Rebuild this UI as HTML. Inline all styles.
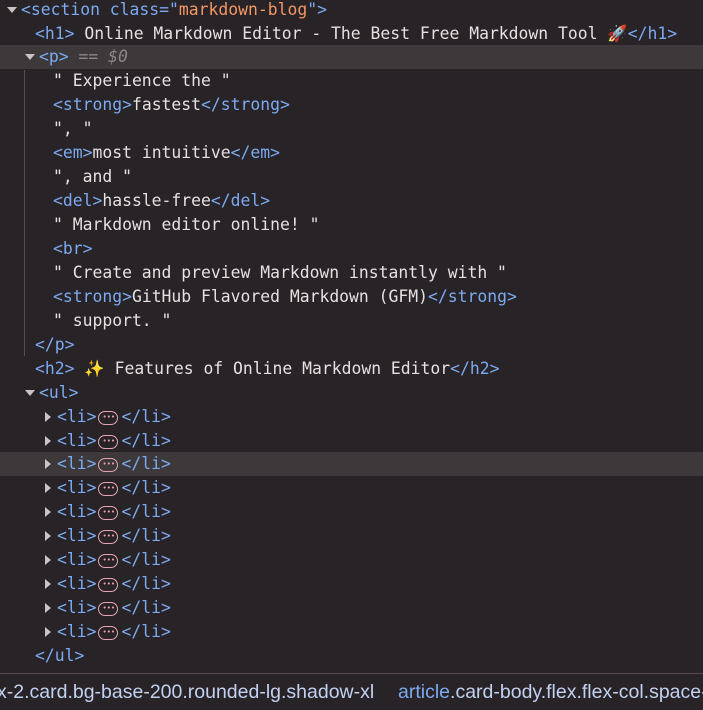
<!DOCTYPE html>
<html><head><meta charset="utf-8"><style>
body{margin:0;width:703px;height:709px;background:#282326;overflow:hidden;position:relative;font-family:"DejaVu Sans Mono","Liberation Mono",monospace;font-size:16.4px;color:#e3e1e1}
.r{position:absolute;left:0;right:0;height:24px;line-height:24px;white-space:pre}
.hl{background:#3d3839}
.t{color:#7caaf0}
.v{color:#f29766}
.g{color:#8d8888;font-style:italic}
.tri{position:absolute;width:0;height:0}
.dn{border-left:5px solid transparent;border-right:5px solid transparent;border-top:6px solid #c9c4c4;top:9px}
.rt{border-top:5px solid transparent;border-bottom:5px solid transparent;border-left:6px solid #c9c4c4;top:7px}
.dots{display:inline-block;width:20px;height:14px;border:1.4px solid #e8a3b0;border-radius:8px;vertical-align:-3px;box-sizing:border-box;position:relative;margin:0 3px 0 2px}
.dots:after{content:"•••";position:absolute;left:3px;top:-7px;font-size:7px;color:#e8a3b0;letter-spacing:0}
.guide{position:absolute;left:24px;top:70px;width:1px;height:286px;background:#5b4a50}
.bar{position:absolute;left:0;right:0;top:673px;height:36px;border-top:1px solid #55484d;background:#282326;font-family:"Liberation Sans",sans-serif;font-size:19.5px;color:#c2d1f2;line-height:36px;white-space:pre}
</style></head><body>
<div class="r" style="top:-2px"><span class="tri dn" style="left:7px"></span><span style="position:absolute;left:21px"><span class="t">&lt;section class=</span><span class="t">"</span><span class="v">markdown-blog</span><span class="t">"&gt;</span></span></div>
<div class="r" style="top:22px"><span style="position:absolute;left:35px"><span class="t">&lt;h1&gt;</span> Online Markdown Editor - The Best Free Markdown Tool 🚀<span class="t">&lt;/h1&gt;</span></span></div>
<div class="r hl" style="top:45px"><span class="tri dn" style="left:25px"></span><span style="position:absolute;left:39px"><span class="t">&lt;p&gt;</span> <span class="g">== $0</span></span></div>
<div class="guide"></div>
<div class="r" style="top:69px"><span style="position:absolute;left:53px">" Experience the "</span></div>
<div class="r" style="top:93px"><span style="position:absolute;left:53px"><span class="t">&lt;strong&gt;</span>fastest<span class="t">&lt;/strong&gt;</span></span></div>
<div class="r" style="top:117px"><span style="position:absolute;left:53px">", "</span></div>
<div class="r" style="top:141px"><span style="position:absolute;left:53px"><span class="t">&lt;em&gt;</span>most intuitive<span class="t">&lt;/em&gt;</span></span></div>
<div class="r" style="top:165px"><span style="position:absolute;left:53px">", and "</span></div>
<div class="r" style="top:189px"><span style="position:absolute;left:53px"><span class="t">&lt;del&gt;</span>hassle-free<span class="t">&lt;/del&gt;</span></span></div>
<div class="r" style="top:213px"><span style="position:absolute;left:53px">" Markdown editor online! "</span></div>
<div class="r" style="top:237px"><span style="position:absolute;left:53px"><span class="t">&lt;br&gt;</span></span></div>
<div class="r" style="top:261px"><span style="position:absolute;left:53px">" Create and preview Markdown instantly with "</span></div>
<div class="r" style="top:285px"><span style="position:absolute;left:53px"><span class="t">&lt;strong&gt;</span>GitHub Flavored Markdown (GFM)<span class="t">&lt;/strong&gt;</span></span></div>
<div class="r" style="top:309px"><span style="position:absolute;left:53px">" support. "</span></div>
<div class="r" style="top:333px"><span style="position:absolute;left:35px"><span class="t">&lt;/p&gt;</span></span></div>
<div class="r" style="top:357px"><span style="position:absolute;left:35px"><span class="t">&lt;h2&gt;</span> ✨ Features of Online Markdown Editor<span class="t">&lt;/h2&gt;</span></span></div>
<div class="r" style="top:381px"><span class="tri dn" style="left:25px"></span><span style="position:absolute;left:39px"><span class="t">&lt;ul&gt;</span></span></div>
<div class="r" style="top:405px"><span class="tri rt" style="left:45px"></span><span style="position:absolute;left:57px"><span class="t">&lt;li&gt;</span><span class="dots"></span><span class="t">&lt;/li&gt;</span></span></div>
<div class="r" style="top:429px"><span class="tri rt" style="left:45px"></span><span style="position:absolute;left:57px"><span class="t">&lt;li&gt;</span><span class="dots"></span><span class="t">&lt;/li&gt;</span></span></div>
<div class="r hl" style="top:452px"><span class="tri rt" style="left:45px"></span><span style="position:absolute;left:57px"><span class="t">&lt;li&gt;</span><span class="dots"></span><span class="t">&lt;/li&gt;</span></span></div>
<div class="r" style="top:476px"><span class="tri rt" style="left:45px"></span><span style="position:absolute;left:57px"><span class="t">&lt;li&gt;</span><span class="dots"></span><span class="t">&lt;/li&gt;</span></span></div>
<div class="r" style="top:500px"><span class="tri rt" style="left:45px"></span><span style="position:absolute;left:57px"><span class="t">&lt;li&gt;</span><span class="dots"></span><span class="t">&lt;/li&gt;</span></span></div>
<div class="r" style="top:524px"><span class="tri rt" style="left:45px"></span><span style="position:absolute;left:57px"><span class="t">&lt;li&gt;</span><span class="dots"></span><span class="t">&lt;/li&gt;</span></span></div>
<div class="r" style="top:548px"><span class="tri rt" style="left:45px"></span><span style="position:absolute;left:57px"><span class="t">&lt;li&gt;</span><span class="dots"></span><span class="t">&lt;/li&gt;</span></span></div>
<div class="r" style="top:572px"><span class="tri rt" style="left:45px"></span><span style="position:absolute;left:57px"><span class="t">&lt;li&gt;</span><span class="dots"></span><span class="t">&lt;/li&gt;</span></span></div>
<div class="r" style="top:596px"><span class="tri rt" style="left:45px"></span><span style="position:absolute;left:57px"><span class="t">&lt;li&gt;</span><span class="dots"></span><span class="t">&lt;/li&gt;</span></span></div>
<div class="r" style="top:620px"><span class="tri rt" style="left:45px"></span><span style="position:absolute;left:57px"><span class="t">&lt;li&gt;</span><span class="dots"></span><span class="t">&lt;/li&gt;</span></span></div>
<div class="r" style="top:644px"><span style="position:absolute;left:35px"><span class="t">&lt;/ul&gt;</span></span></div>
<div class="bar"><span style="position:absolute;left:-3px">x-2.card.bg-base-200.rounded-lg.shadow-xl</span><span style="position:absolute;left:398px"><span style="color:#7caaf0">article</span>.card-body.flex.flex-col.space-y-4</span></div>
</body></html>
